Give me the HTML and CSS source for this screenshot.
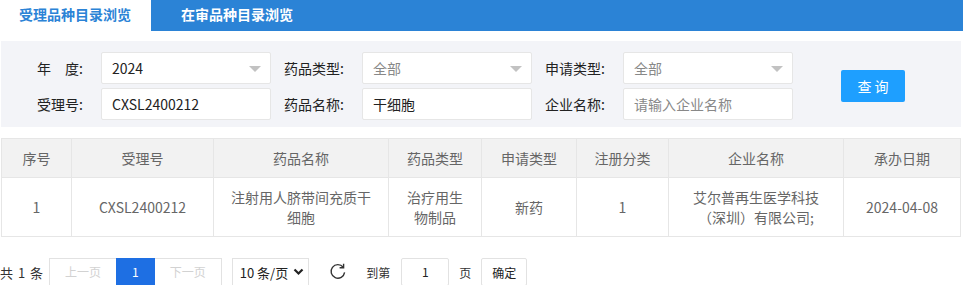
FILE: index.html
```html
<!DOCTYPE html>
<html lang="zh-CN">
<head>
    <meta charset="utf-8">
    <title>受理品种目录浏览</title>
    <link rel="stylesheet" href="styles.css">
</head>
<body>
    <div class="tabs">
        <a class="tab active">受理品种目录浏览</a>
        <a class="tab">在审品种目录浏览</a>
    </div>

    <div class="page">
        <form class="search">
            <div class="fields">
                <label class="lbl">年&emsp;度:</label>
                <div class="input select"><span>2024</span><i class="caret"></i></div>
                <label class="lbl">药品类型:</label>
                <div class="input select"><span class="ph">全部</span><i class="caret"></i></div>
                <label class="lbl">申请类型:</label>
                <div class="input select"><span class="ph">全部</span><i class="caret"></i></div>

                <label class="lbl">受理号:</label>
                <div class="input"><span>CXSL2400212</span></div>
                <label class="lbl">药品名称:</label>
                <div class="input"><span>干细胞</span></div>
                <label class="lbl">企业名称:</label>
                <div class="input"><span class="ph">请输入企业名称</span></div>
            </div>
            <button type="button" class="btn-query">查询</button>
        </form>

        <table class="grid">
            <colgroup>
                <col style="width:70px">
                <col style="width:142px">
                <col style="width:175px">
                <col style="width:93px">
                <col style="width:95px">
                <col style="width:92px">
                <col style="width:175px">
                <col>
            </colgroup>
            <thead>
                <tr>
                    <th>序号</th>
                    <th>受理号</th>
                    <th>药品名称</th>
                    <th>药品类型</th>
                    <th>申请类型</th>
                    <th>注册分类</th>
                    <th>企业名称</th>
                    <th>承办日期</th>
                </tr>
            </thead>
            <tbody>
                <tr>
                    <td>1</td>
                    <td>CXSL2400212</td>
                    <td>注射用人脐带间充质干细胞</td>
                    <td>治疗用生物制品</td>
                    <td>新药</td>
                    <td>1</td>
                    <td>艾尔普再生医学科技（深圳）有限公司;</td>
                    <td>2024-04-08</td>
                </tr>
            </tbody>
        </table>
    </div>

    <div class="pager">
        <span class="count">共 1 条</span>
        <span class="pg">
            <a class="pg-item disabled">上一页</a><span class="pg-item current">1</span><a class="pg-item disabled">下一页</a>
        </span>
        <span class="limits">10 条/页
            <svg width="11" height="8" viewBox="0 0 11 8"><path d="M1.5 1.5 L5.5 5.5 L9.5 1.5" fill="none" stroke="#222" stroke-width="2.2"/></svg>
        </span>
        <svg class="refresh" width="18" height="18" viewBox="0 0 18 18">
            <path d="M14.2 4.2 A6.8 6.8 0 1 0 15.6 9.4" fill="none" stroke="#333" stroke-width="1.4"/>
            <path d="M14.6 0.8 L14.6 4.8 L10.6 4.8" fill="none" stroke="#333" stroke-width="1.4"/>
        </svg>
        <span class="skip">到第</span>
        <span class="skip-input">1</span>
        <span class="skip">页</span>
        <button type="button" class="skip-btn">确定</button>
    </div>
</body>
</html>
```

FILE: styles.css
```css
body {
    margin: 0;
    font-family: "Noto Sans CJK SC", "Noto Sans", sans-serif;
    font-size: 14px;
    color: #333;
    background: #fff;
}

/* tabs */
.tabs {
    display: flex;
    height: 31px;
    background: #2b83d6;
}
.tab {
    display: block;
    line-height: 29px;
    font-weight: bold;
    color: #fff;
    padding: 0 30px;
    white-space: nowrap;
}
.tab.active {
    background: #fff;
    color: #2b83d6;
    width: 151px;
    box-sizing: border-box;
    padding: 0 0 0 19px;
}

.page {
    padding: 10px 2px 0 1px;
}

/* search panel */
.search {
    display: flex;
    align-items: center;
    background: #f3f4f8;
    padding: 11px 0 7px 9px;
}
.fields {
    display: grid;
    grid-template-columns: 91px 170px 91px 170px 91px 170px;
    row-gap: 4px;
}
.lbl {
    text-align: right;
    padding-right: 18px;
    line-height: 32px;
    color: #222;
}
.input {
    position: relative;
    height: 32px;
    box-sizing: border-box;
    border: 1px solid #e6e6e6;
    border-radius: 2px;
    background: #fff;
    padding-left: 10px;
    line-height: 30px;
    color: #222;
}
.input .ph {
    color: #888;
}
.caret {
    position: absolute;
    right: 9px;
    top: 13px;
    width: 0;
    height: 0;
    border-left: 6px solid transparent;
    border-right: 6px solid transparent;
    border-top: 6px solid #c2c2c2;
}
.btn-query {
    margin-left: 48px;
    width: 64px;
    height: 32px;
    border: none;
    border-radius: 2px;
    background: #1e9fff;
    color: #fff;
    font-family: inherit;
    font-size: 14px;
    letter-spacing: 3px;
    padding: 0 0 0 3px;
}

/* table */
.grid {
    width: 100%;
    margin-top: 11px;
    border-collapse: collapse;
    table-layout: fixed;
    color: #666;
}
.grid th,
.grid td {
    border: 1px solid #e6e6e6;
    padding: 9px 15px;
    line-height: 20px;
    text-align: center;
    font-weight: normal;
}
.grid th {
    background: #f2f2f2;
}

/* pager */
.pager {
    display: flex;
    align-items: center;
    margin-top: 21px;
    font-size: 12px;
    color: #333;
}
.count {
    margin-right: 6px;
    font-size: 13px;
    word-spacing: 2px;
}
.pg {
    display: flex;
}
.pg-item {
    display: block;
    height: 28px;
    line-height: 26px;
    box-sizing: border-box;
    border: 1px solid #e2e2e2;
    padding: 0 15px;
    margin-right: -1px;
    color: #333;
}
.pg-item.disabled {
    color: #d2d2d2;
}
.pg-item.current {
    background: #1e6fe3;
    border-color: #1e6fe3;
    color: #fff;
    position: relative;
}
.limits {
    display: flex;
    align-items: center;
    gap: 5px;
    height: 28px;
    box-sizing: border-box;
    border: 1px solid #e2e2e2;
    margin-left: 11px;
    padding: 0 4px 0 7px;
    font-size: 13px;
    color: #222;
}
.refresh {
    margin-left: 20px;
}
.skip {
    margin-left: 19px;
    color: #333;
    font-size: 12px;
}
.skip-input {
    display: block;
    width: 48px;
    height: 28px;
    line-height: 26px;
    box-sizing: border-box;
    border: 1px solid #e2e2e2;
    border-radius: 2px;
    margin-left: 11px;
    text-align: center;
    color: #222;
}
.skip + .skip-input + .skip {
    margin-left: 10px;
}
.skip-btn {
    height: 28px;
    margin-left: 10px;
    border: 1px solid #e2e2e2;
    border-radius: 2px;
    background: #fff;
    padding: 0 10px;
    font-family: inherit;
    font-size: 12px;
    color: #222;
}
```
